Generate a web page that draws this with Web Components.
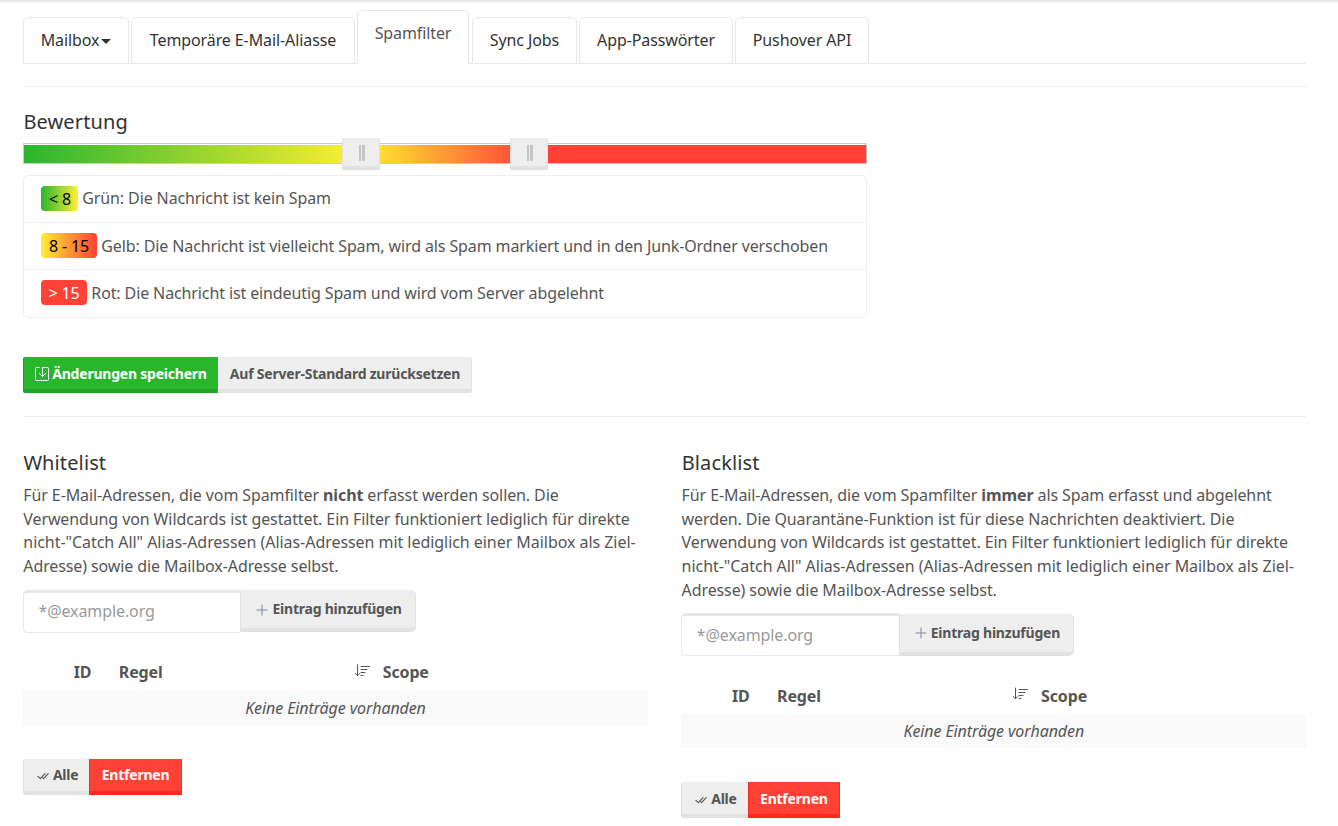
<!DOCTYPE html>
<html lang="de">
<head>
<meta charset="utf-8">
<title>Spamfilter</title>
<style>
html,body{margin:0;background:#fff;overflow:hidden}
body{font-family:"Noto Sans",sans-serif;font-size:16px;letter-spacing:-.1px;line-height:23.7px;color:#555;height:826px}
</style>
</head>
<body>
<spam-page></spam-page>
<script>
const define = (name, html, setup) => customElements.define(name, class extends HTMLElement {
  constructor() {
    super();
    const t = document.createElement('template');
    t.innerHTML = html;
    this.attachShadow({mode: 'open'}).append(t.content.cloneNode(true));
  }
  connectedCallback() { if (setup) setup(this, this.shadowRoot); }
});

define('nav-tab', `<style>
:host{display:flex;box-sizing:border-box;height:47px;border:1px solid #e7e7e7;border-radius:5px 5px 0 0;background:#fff;color:#333;align-items:center;justify-content:center;white-space:nowrap;padding-top:.5px}
:host([active]){height:54px;border-bottom-color:#fff;color:#555;padding-bottom:6.5px;padding-top:0}
</style><slot></slot>`);

define('caret-down', `<style>:host{display:block;border:5px solid transparent;border-top-color:currentColor;border-bottom:0;margin:1px 0 0 2px}</style>`);

define('tab-bar', `<style>
:host{display:flex;align-items:flex-end;height:54px}
.line{flex:1;border-bottom:1px solid #e7e7e7}
.g{border-bottom:1px solid #e7e7e7;width:2px}
.g3{width:3px}
</style>
<nav-tab style="width:106px">Mailbox<caret-down></caret-down></nav-tab><div class="g"></div>
<nav-tab style="width:224px">Temporäre E-Mail-Aliasse</nav-tab><div class="g"></div>
<nav-tab active style="width:112px">Spamfilter</nav-tab><div class="g g3"></div>
<nav-tab style="width:105px">Sync Jobs</nav-tab><div class="g"></div>
<nav-tab style="width:154px">App-Passwörter</nav-tab><div class="g"></div>
<nav-tab style="width:134px">Pushover API</nav-tab><div class="line"></div>`);

define('rule-line', `<style>:host{display:block;height:1px;background:#eee}</style>`);

define('section-title', `<style>:host{display:block;font-size:20px;letter-spacing:.12px;line-height:24px;color:#333;white-space:nowrap;text-indent:.4px}</style><slot></slot>`);

define('score-slider', `<style>
:host{display:block;position:relative;box-sizing:border-box;width:844px;height:21px;border:1px solid #ccc;border-right-color:#bbb}
.track{display:flex;height:18px;margin-top:1px}
.a{width:337px;background:linear-gradient(90deg,#29b62d,#fff033)}
.b{width:169px;background:linear-gradient(90deg,#fff033,#ff4136)}
.c{flex:1;background:#ff4136}
.h{position:absolute;top:-6px;box-sizing:border-box;width:38px;height:32px;background:#eee;border:1px solid #e2e2e2;border-top-color:#eee;border-bottom-width:4px}
.h svg{display:block;margin:6px 0 0 15px}
</style>
<div class="track"><div class="a"></div><div class="b"></div><div class="c"></div></div>
<div class="h" style="left:318px"><svg width="8" height="16"><path fill="#c5c5c5" d="M1 0h2v16H1zM4 0h3v16H4z"/></svg></div>
<div class="h" style="left:486.3px"><svg width="8" height="16"><path fill="#c5c5c5" d="M1 0h2v16H1zM4 0h3v16H4z"/></svg></div>`);

define('score-badge', `<style>
:host{display:flex;flex:none;box-sizing:border-box;height:25px;border-radius:4px;align-items:center;justify-content:center;color:#000;white-space:nowrap;padding-top:2px}
:host([kind=green]){background:linear-gradient(90deg,#29b62d,#fff033);width:37px;padding-left:1px}
:host([kind=yellow]){background:linear-gradient(90deg,#fff033,#ff4136);width:56px}
:host([kind=red]){background:#ff4136;color:#fff;width:46px}
</style><slot></slot>`);

define('score-row', `<style>
:host{display:flex;box-sizing:border-box;height:47px;padding:0 17px 1px;align-items:center;gap:4.3px;border-bottom:1px solid #eee;white-space:nowrap;letter-spacing:-.115px}
:host([low]) span{padding-top:2px}
:host([last]){border:0;padding-bottom:2px}
</style><slot name="badge"></slot><span><slot></slot></span>`);

define('score-list', `<style>
:host{display:block;box-sizing:border-box;width:844px;height:143px;border:1px solid #eee;border-radius:5px}
</style><slot></slot>`);

define('push-button', `<style>
:host{display:flex;box-sizing:border-box;height:36px;align-items:center;justify-content:center;background:#eee;border:1px solid #e2e2e2;border-top-color:#eee;border-bottom-width:4px;font-size:14px;letter-spacing:-.22px;font-weight:700;color:#555;white-space:nowrap;border-radius:0 2px 2px 0;padding-top:1px}
:host([kind=success]){background:#28b62c;border-color:#28b62c #28b62c #23a127 #23a127;color:#fff;border-radius:2px 0 0 2px}
:host([kind=danger]){background:#ff4136;border-color:#ff4136 #ff291d #ff291d;color:#fff;border-radius:0}
:host([first]){border-radius:2px 0 0 2px;border-right:0}
:host([first]),:host([kind=danger]){padding-top:0}
:host([flat]){border-left:0;padding-left:1px}
:host([tall]){height:42px;border-radius:0 5px 5px 0;padding:0 2px 1px 0}
</style><slot></slot>`);

const icons = {
  save: '<path d="M5 1.5H2.5a1 1 0 0 0-1 1v11a1 1 0 0 0 1 1h11a1 1 0 0 0 1-1v-11a1 1 0 0 0-1-1H8.5V10.5M5.5 7.5l3 3 3-3"/>',
  plus: '<path d="M8 3v10M3 8h10"/>',
  check: '<path stroke-width="1.5" d="M1.2 8.4l3.3 3.2L10.7 4.8M7.7 10.6l1 1L15 4.8"/>',
  sort: '<path d="M3.5 2v10.5M1.3 10.5l2.2 2.2 2.2-2.2M7 3.5h8.5M7 6.5h6M7 9.5h4M7 12.5h2"/>'
};
define('line-icon', `<style>:host{display:block;flex:none}svg{display:block;width:100%;height:100%;fill:none;stroke:currentColor;stroke-width:1;stroke-linecap:round;stroke-linejoin:round}</style><svg viewBox="0 0 16 16"></svg>`,
  (el, root) => { root.querySelector('svg').innerHTML = icons[el.getAttribute('name')]; });

define('entry-form', `<style>
:host{display:flex;align-items:flex-start;height:42.8px}
.in{box-sizing:border-box;width:217.4px;height:42.8px;border:1px solid #e7e7e7;border-top-width:3px;border-right:0;border-radius:5px 0 0 5px;padding:7.3px 0 0 14.5px;color:#999}
line-icon{width:16px;height:16px;margin:1px 2px 0 2px;color:#7f87a0}
push-button{width:175.4px;margin-top:.3px}
</style><div class="in">*@example.org</div><push-button tall><line-icon name="plus"></line-icon>Eintrag hinzufügen</push-button>`);

define('entry-table', `<style>
:host{display:block}
.head{display:flex;box-sizing:border-box;height:36px;padding-top:1.36px;align-items:center;font-weight:700;padding-left:50.7px;letter-spacing:-.15px}
.id{width:45.1px}.re{width:235px}
line-icon{width:16px;height:16px;margin:-4px 13px 0 0}
.empty{display:flex;box-sizing:border-box;height:34.5px;padding-top:2.4px;align-items:center;justify-content:center;background:#f9f9f9;font-style:italic}
</style>
<div class="head"><span class="id">ID</span><span class="re">Regel</span><line-icon name="sort"></line-icon><span>Scope</span></div>
<div class="empty"><span>Keine Einträge vorhanden</span></div>`);

define('filter-list', `<style>
:host{display:block;width:625px}
.text{margin-top:8.8px;white-space:nowrap;padding-left:.3px;letter-spacing:-.105px}
entry-form{margin-top:11.1px}
entry-table{margin-top:21.5px}
.act{display:flex;margin-top:34px}
line-icon{width:12px;height:12px;margin:2px 4px 0 2px}
</style>
<section-title><slot name="title"></slot></section-title>
<div class="text"><slot></slot></div>
<entry-form></entry-form><entry-table></entry-table>
<div class="act"><push-button first style="width:66.3px"><line-icon name="check"></line-icon>Alle</push-button><push-button kind="danger" style="width:92.5px">Entfernen</push-button></div>`);

define('spam-page', `<style>
:host{display:block;box-sizing:border-box;height:826px;border-top:2px solid #e7e7e7;padding:8px 32px 0 23px;overflow:hidden}
tab-bar{margin-bottom:22px}
.t{margin:23px 0 9px}
score-list{margin-top:11px}
.btns{display:flex;margin:39px 0 23px}
.save{width:16px;height:16px;margin-right:2px}
.cols{display:grid;grid-template-columns:625px 625px;column-gap:33.3px;margin-top:34px}
.wide{letter-spacing:-.05px}
</style>
<tab-bar></tab-bar><rule-line></rule-line>
<section-title class="t">Bewertung</section-title>
<score-slider></score-slider>
<score-list>
<score-row><score-badge slot="badge" kind="green">&lt; 8</score-badge>Grün: Die Nachricht ist kein Spam</score-row>
<score-row low><score-badge slot="badge" kind="yellow">8 - 15</score-badge>Gelb: Die Nachricht ist vielleicht Spam, wird als Spam markiert und in den Junk-Ordner verschoben</score-row>
<score-row low last><score-badge slot="badge" kind="red">&gt; 15</score-badge>Rot: Die Nachricht ist eindeutig Spam und wird vom Server abgelehnt</score-row>
</score-list>
<div class="btns"><push-button kind="success" style="width:195px"><line-icon class="save" name="save"></line-icon>Änderungen speichern</push-button><push-button flat style="width:254px">Auf Server-Standard zurücksetzen</push-button></div>
<rule-line></rule-line>
<div class="cols">
<filter-list><span slot="title">Whitelist</span>Für E-Mail-Adressen, die vom Spamfilter <b>nicht</b> erfasst werden sollen. Die<br>Verwendung von Wildcards ist gestattet. Ein Filter funktioniert lediglich für direkte<br><span class="wide">nicht-"Catch All" Alias-Adressen (Alias-Adressen mit lediglich einer Mailbox als Ziel-</span><br>Adresse) sowie die Mailbox-Adresse selbst.</filter-list>
<filter-list><span slot="title">Blacklist</span>Für E-Mail-Adressen, die vom Spamfilter <b>immer</b> als Spam erfasst und abgelehnt<br>werden. Die Quarantäne-Funktion ist für diese Nachrichten deaktiviert. Die<br>Verwendung von Wildcards ist gestattet. Ein Filter funktioniert lediglich für direkte<br><span class="wide">nicht-"Catch All" Alias-Adressen (Alias-Adressen mit lediglich einer Mailbox als Ziel-</span><br>Adresse) sowie die Mailbox-Adresse selbst.</filter-list>
</div>`);
</script>
</body>
</html>
